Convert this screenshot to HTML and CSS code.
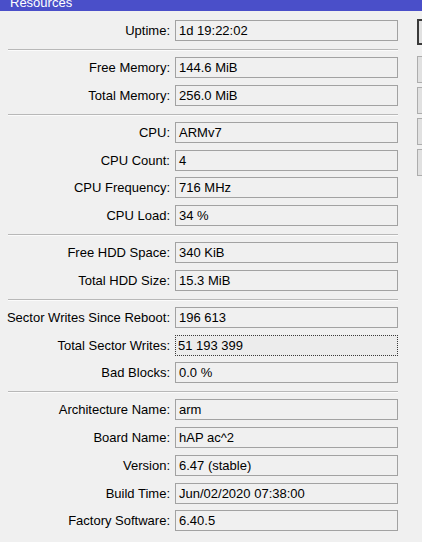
FILE: index.html
```html
<!DOCTYPE html>
<html>
<head>
<meta charset="utf-8">
<link rel="stylesheet" href="styles.css">
</head>
<body>
<div class="titlebar"><span class="title">Resources</span></div>
<div class="main">
  <div class="form">
    <div class="group">
      <div class="row"><span class="label">Uptime:</span><div class="field">1d 19:22:02</div></div>
    </div>
    <div class="sep"></div>
    <div class="group">
      <div class="row"><span class="label">Free Memory:</span><div class="field">144.6 MiB</div></div>
      <div class="row"><span class="label">Total Memory:</span><div class="field">256.0 MiB</div></div>
    </div>
    <div class="sep"></div>
    <div class="group">
      <div class="row"><span class="label">CPU:</span><div class="field">ARMv7</div></div>
      <div class="row"><span class="label">CPU Count:</span><div class="field">4</div></div>
      <div class="row"><span class="label">CPU Frequency:</span><div class="field">716 MHz</div></div>
      <div class="row"><span class="label">CPU Load:</span><div class="field">34 %</div></div>
    </div>
    <div class="sep"></div>
    <div class="group">
      <div class="row"><span class="label">Free HDD Space:</span><div class="field">340 KiB</div></div>
      <div class="row"><span class="label">Total HDD Size:</span><div class="field">15.3 MiB</div></div>
    </div>
    <div class="sep"></div>
    <div class="group">
      <div class="row"><span class="label">Sector Writes Since Reboot:</span><div class="field">196 613</div></div>
      <div class="row"><span class="label">Total Sector Writes:</span><div class="field focused">51 193 399</div></div>
      <div class="row"><span class="label">Bad Blocks:</span><div class="field">0.0 %</div></div>
    </div>
    <div class="sep"></div>
    <div class="group">
      <div class="row"><span class="label">Architecture Name:</span><div class="field">arm</div></div>
      <div class="row"><span class="label">Board Name:</span><div class="field">hAP ac^2</div></div>
      <div class="row"><span class="label">Version:</span><div class="field">6.47 (stable)</div></div>
      <div class="row"><span class="label">Build Time:</span><div class="field">Jun/02/2020 07:38:00</div></div>
      <div class="row"><span class="label">Factory Software:</span><div class="field">6.40.5</div></div>
    </div>
  </div>
  <div class="buttons">
    <div class="btn btn-default"></div>
    <div class="btn"></div>
    <div class="btn"></div>
    <div class="btn"></div>
    <div class="btn"></div>
  </div>
</div>
</body>
</html>
```

FILE: styles.css
```css
html, body {
  margin: 0;
  padding: 0;
}
body {
  background: #f0f0f0;
  font-family: "Liberation Sans", Arial, sans-serif;
  font-size: 13px;
  color: #000;
  width: 422px;
  height: 542px;
  overflow: hidden;
}
.titlebar {
  height: 11px;
  background: #4a4fc9;
  overflow: hidden;
}
.title {
  display: block;
  color: #ffffff;
  padding-left: 10px;
  font-size: 13px;
  line-height: 13px;
  margin-top: -4px;
}
.main {
  display: flex;
  width: 422px;
}
.form {
  flex: 0 0 398px;
  width: 398px;
  padding-top: 9px;
  display: flex;
  flex-direction: column;
}
.group {
  display: flex;
  flex-direction: column;
  gap: 6.75px;
}
.row {
  display: flex;
  align-items: center;
  height: 21px;
}
.label {
  flex: 0 0 170px;
  width: 170px;
  text-align: right;
  white-space: nowrap;
  margin-right: 5px;
}
.field {
  flex: 1;
  height: 21px;
  box-sizing: border-box;
  border: 1px solid #a2a2a2;
  background: #f0f0f0;
  padding-left: 3px;
  line-height: 19px;
  white-space: nowrap;
  color: #000;
}
.field.focused {
  border: 1px dotted #3a3a3a;
  background: #ececec;
  padding-left: 2px;
}
.sep {
  margin: 8px 0 6px 8px;
  border-top: 1px solid #b8b8b8;
  border-bottom: 1px solid #fbfbfb;
}
.buttons {
  margin-left: 19px;
  padding-top: 8px;
  display: flex;
  flex-direction: column;
  gap: 4px;
}
.btn {
  width: 5px;
  height: 27px;
  box-sizing: border-box;
  border: 1px solid #adadad;
  border-right: none;
  background: #e1e1e1;
}
.btn-default {
  height: 26px;
  border: 2px solid #3a3a3a;
  border-right: none;
  margin-bottom: 7px;
}
```
